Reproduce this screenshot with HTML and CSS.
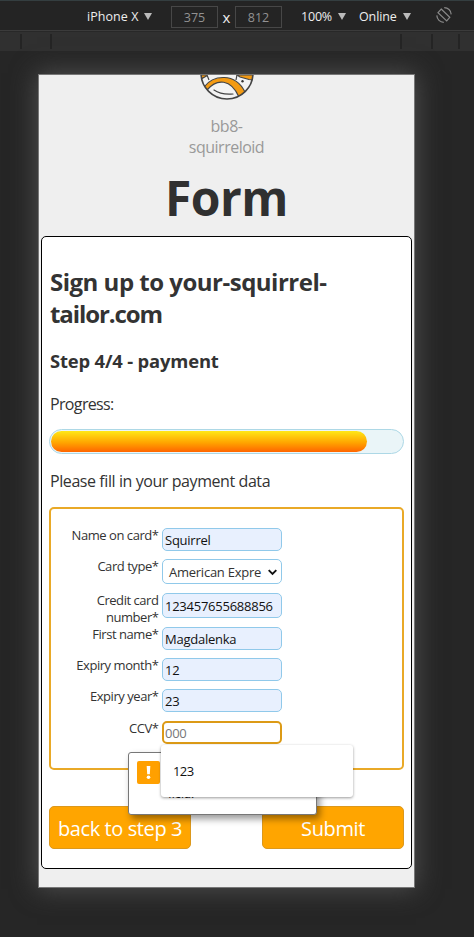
FILE: index.html
```html
<!DOCTYPE html>
<html lang="en">
<head>
<meta charset="utf-8">
<title>Form</title>
<link rel="stylesheet" href="styles.css">
</head>
<body>
<header class="toolbar">
  <span class="device">iPhone X</span><i class="caret"></i>
  <span class="dim">375</span><span class="times">x</span><span class="dim">812</span>
  <span class="zoom">100%</span><i class="caret"></i>
  <span class="net">Online</span><i class="caret"></i>
  <svg class="rotate" width="18" height="18" viewBox="0 0 18 18" fill="none" stroke="#898989" stroke-width="1.2">
    <path d="M6.2 3 14.8 11.3 11.7 14.9 3 6.6Z"/><path d="M9.2 1.6C13 1.6 16 4.5 16.2 8.4M1.8 9.4C2 13.3 5 16.3 8.8 16.3"/>
  </svg>
</header>
<div class="ruler"><i></i><i></i><i></i><i></i><i></i></div>
<main class="phone">
  <div class="brand">
    <svg class="logo" width="56" height="26" viewBox="0 0 56 26">
      <defs><clipPath id="ball"><circle cx="28" cy="-2" r="26"/></clipPath></defs>
      <circle cx="28" cy="-2" r="26" fill="#f3f3f3"/>
      <g clip-path="url(#ball)" stroke="#454545" stroke-width="1.2">
        <path d="M0 0H7L7.5 1 2 4Z" fill="#f49b13"/>
        <path d="M8 0 10 5M38 0 37 5" fill="none"/>
        <path d="M38 0H56V5L50 4.5 41 2Z" fill="#f49b13"/>
        <path d="M5 12C14 0 36 -3 46 17L40 22C32 4 18 3 8 15Z" fill="#f49b13"/>
        <path d="M15 15Q22 20 34 19" fill="none" stroke-linecap="round"/>
      </g>
      <circle cx="43.5" cy="6.3" r="1.2" fill="#333"/>
      <circle cx="28" cy="-2" r="26" fill="none" stroke="#454545" stroke-width="1.6"/>
    </svg>
    <p class="nick">bb8-<br>squirreloid</p>
    <h1>Form</h1>
  </div>
  <section class="card">
    <h2>Sign up to your-squirrel-<br><span class="tight">tailor.com</span></h2>
    <h3>Step 4/4 - payment</h3>
    <p class="text progress-label">Progress:</p>
    <div class="progress"><div class="bar"></div></div>
    <p class="text fill">Please fill in your payment data</p>
    <form class="fields">
      <label>Name on card*</label><div class="field auto">Squirrel</div>
      <label>Card type*</label><div class="field select"><span>American Expre</span><svg width="9" height="7" viewBox="0 0 9 7" fill="none" stroke="#111" stroke-width="1.9"><path d="M.7 1.2 4.5 5 8.3 1.2"/></svg></div>
      <label>Credit card<br>number*</label><div class="field auto tall num">123457655688856</div>
      <label>First name*</label><div class="field auto">Magdalenka</div>
      <label>Expiry month*</label><div class="field auto">12</div>
      <label>Expiry year*</label><div class="field auto">23</div>
      <label>CCV*</label>
      <div class="field focus">000
        <div class="tooltip"><span class="warn"><svg width="23" height="23" viewBox="0 0 23 23"><path d="M9.7 5h3.6l-.5 8.2h-2.6z" fill="#fff"/><circle cx="11.5" cy="16.3" r="1.8" fill="#fff"/></svg></span><span class="message">field.</span></div>
        <div class="suggest">123</div>
      </div>
    </form>
    <div class="actions"><div class="button back">back to step 3</div><div class="button">Submit</div></div>
  </section>
</main>
</body>
</html>
```
FILE: styles.css
```css
* { box-sizing: border-box; }
body { margin: 0; height: 937px; overflow: hidden; background: #262626; font-family: "Open Sans", "Noto Sans", sans-serif; color: #333; }
p, h1, h2, h3 { margin: 0; }
.toolbar { display: flex; align-items: center; height: 31px; padding: 2px 0 0 87px; background: #242424; border-top: 1px solid #343e40; border-bottom: 1px solid #3b3b3b; color: #eee; font-size: 12.5px; }
.device { width: 53px; letter-spacing: .05px; white-space: nowrap; }
.caret { width: 8px; height: 7px; margin-left: 4px; background: #bbb; clip-path: polygon(0 0, 100% 0, 50% 100%); }
.dim { width: 47px; height: 22px; border: 1px solid #474747; color: #929292; text-align: center; line-height: 21px; }
.device + .caret + .dim { margin-left: 19px; }
.times { width: 17px; text-align: center; font-size: 15px; font-weight: 500; }
.zoom { width: 33px; margin-left: 19px; letter-spacing: -.2px; white-space: nowrap; }
.net { width: 40px; margin-left: 13px; white-space: nowrap; letter-spacing: -.1px; }
.rotate { margin-left: 24px; margin-top: -3px; }
.ruler { display: grid; grid-template-columns: 22px 30px 350px 31px 27px; height: 20px; padding-top: 2px; background: #303030; border-top: 1px solid #282828; }
.ruler i { height: 15px; border-right: 2px solid #242424; }
.phone { width: 377px; height: 814px; margin: 23px 0 0 38px; border: 1px solid #777; background: #efefef; box-shadow: 0 0 24px 1px #505050; }
.brand { height: 161px; text-align: center; }
.logo { display: block; margin: 0 auto; }
.nick { margin-top: 15px; color: #999; font-size: 16px; line-height: 21px; letter-spacing: -.5px; }
h1 { color: #303030; font-size: 48px; line-height: 64px; margin-top: 8px; letter-spacing: -.5px; }
.card { width: 371px; height: 633px; margin-left: 2px; padding: 29px 7px 0; border: 1px solid #000; border-radius: 5px; background: #fff; }
h2 { font-size: 24px; line-height: 32px; letter-spacing: -.5px; white-space: nowrap; padding-left: 1px; }
.tight { letter-spacing: -1.1px; }
h3 { margin-top: 18px; padding-left: 1px; font-size: 18.4px; line-height: 25px; letter-spacing: -.17px; }
.text { padding-left: 1px; font-size: 16px; line-height: 21px; letter-spacing: -.42px; }
.progress-label { margin-top: 21px; letter-spacing: -.65px; }
.progress { height: 25px; margin-top: 14px; padding: 1px; border: 1px solid #add8e6; border-radius: 13px; background: #eaf5f8; }
.bar { width: 316px; height: 21px; border-radius: 11px; background: linear-gradient(#ffe817, #ffa500 55%, #ff6500); }
.fill { margin-top: 17px; }
.fields { display: grid; grid-template-columns: 107.5px 120px; grid-template-rows: 31px 34px 34px 31px 31px 32px 23px; column-gap: 3.5px; align-items: start; height: 263px; margin-top: 15px; padding: 19px 0 0; border: 2px solid #e9a927; border-radius: 5px; }
label { margin-top: -1px; text-align: right; font-size: 13px; line-height: 17px; letter-spacing: -.45px; }
.field { position: relative; height: 23px; padding: 0 2px; border: 1px solid #90c9ea; border-radius: 5px; background: #fff; color: #111; font-size: 13px; line-height: 23px; letter-spacing: -.25px; white-space: nowrap; }
.auto { background: #e8f0fe; }
.tall { height: 25px; line-height: 24px; }
.select { display: flex; justify-content: space-between; align-items: center; height: 25px; padding: 2px 4px 0 6px; color: #333; }
.focus { border: 2px solid #dc9a16; padding: 0 1px; color: #777; line-height: 21px; }
.tooltip { position: absolute; left: -36px; top: 29px; width: 189px; height: 63px; padding: 8px; border: 1px solid #777; border-radius: 3px; background: #fff; box-shadow: 3px 4px 7px rgba(0,0,0,.4); display: flex; }
.warn { width: 23px; height: 23px; border-radius: 2px; background: #ffa000; }
.message { margin: 23px 0 0 8px; color: #111; font-size: 12px; line-height: 20px; }
.suggest { position: absolute; left: -3px; top: 22px; width: 192px; height: 52px; padding: 17px 12px; border-radius: 3px; background: #fff; box-shadow: 0 1px 3px rgba(0,0,0,.4); color: #111; line-height: 19px; letter-spacing: -.6px; }
.actions { display: flex; justify-content: space-between; margin-top: 36px; }
.button { width: 142px; height: 43px; border: 1px solid #dc981c; border-radius: 5px; background: #ffa500; color: #fff; font-size: 20px; line-height: 43px; text-align: center; letter-spacing: -.4px; white-space: nowrap; }
```
